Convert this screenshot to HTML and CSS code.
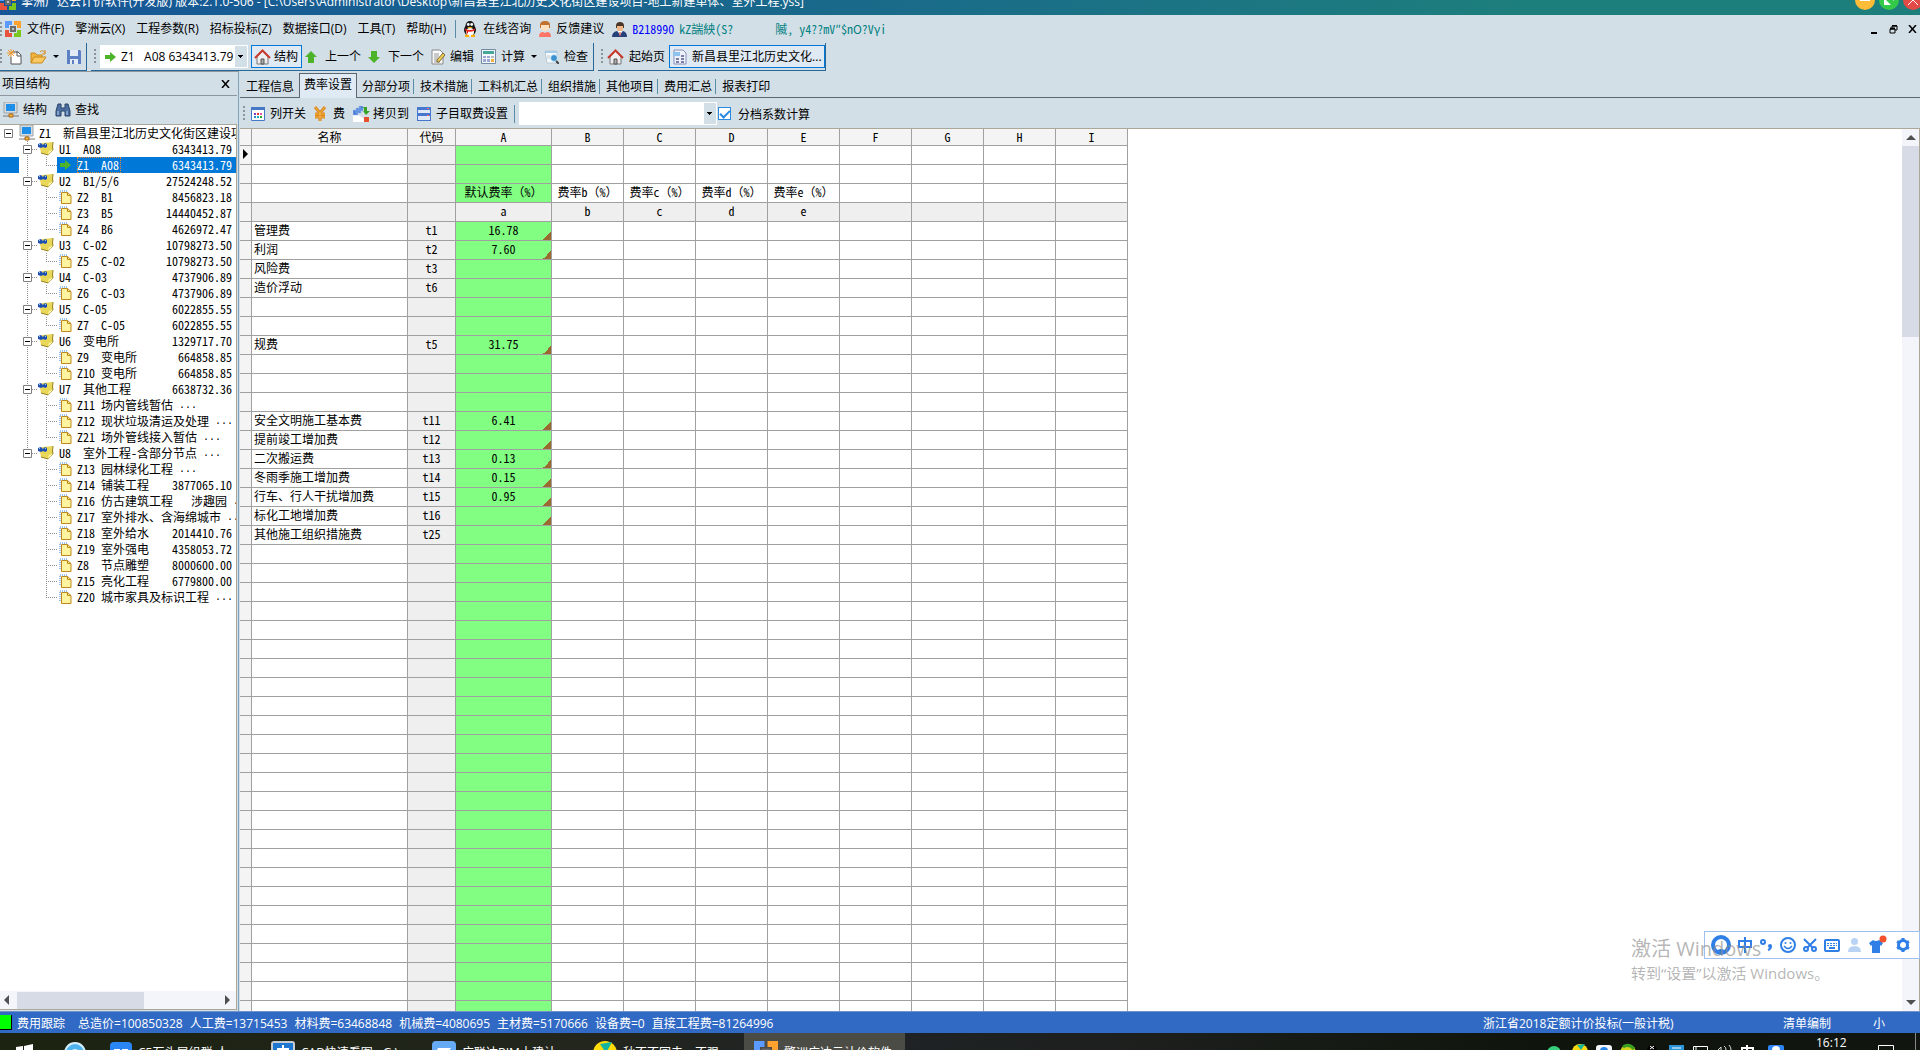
FILE: index.html
```
<!DOCTYPE html>
<html lang="zh-CN">
<head>
<meta charset="utf-8">
<title>擎洲广达云计价软件</title>
<link rel="stylesheet" href="styles.css">
</head>
<body>
<svg class="sprite" aria-hidden="true">
  <symbol id="i-logo" viewBox="0 0 16 16"><path fill="#5b9bff" d="M0 0h7v4H4v3H0z"/><path fill="#ffa12e" d="M9 0h7v7h-4V4H9z"/><path fill="#e8523c" d="M0 9h4v3h3v4H0z"/><path fill="#7ac81e" d="M12 9h4v7H9v-4h3z"/><path fill="#6a6a6a" d="M5 5h6v6H5z"/><path fill="#b9c4cc" d="M7 7h2v2H7z"/></symbol>
  <symbol id="i-qq" viewBox="0 0 16 16"><ellipse cx="8" cy="9" rx="6" ry="6" fill="#151515"/><ellipse cx="8" cy="5" rx="4.500" ry="5" fill="#151515"/><ellipse cx="8" cy="11" rx="4" ry="4" fill="#fff"/><circle cx="6.300" cy="3.500" r="1.400" fill="#fff"/><circle cx="9.700" cy="3.500" r="1.400" fill="#fff"/><path d="M5 6h6l-3 1.500z" fill="#ffb000"/><path d="M3 7.500q5 3 10 0v2q-5 2-7 1v2H4.500V10L3 9z" fill="#e8201c"/><path d="M3 14q2-1 4 0v2H3zM9 14q2-1 4 0v2H9z" fill="#ffb000"/></symbol>
  <symbol id="i-man" viewBox="0 0 12 16"><path fill="#c0702c" d="M1 4q0-4 5-4t5 4v3H1z"/><path fill="#ffe0c0" d="M2 4h8v4q-4 4-8 0z"/><path fill="#ff7466" d="M0 16q0-5 4-5l2 1 2-1q4 0 4 5z"/></symbol>
  <symbol id="i-user" viewBox="0 0 15 15"><path fill="#4a3526" d="M4 4q0-4 4-4t4 4v2H4z"/><path fill="#efb98c" d="M5 4h6v4q-3 3-6 0z"/><path fill="#27417a" d="M0 15q0-5 5-6l3 3 3-3q4 1 4 6z"/><path fill="#fff" d="M6 9h4l-2 5z"/><path fill="#d33" d="M7.500 10h1v4h-1z"/></symbol>
  <symbol id="i-new" viewBox="0 0 15 16"><path d="M5 3h6l3 3v9H4V8" fill="#fff" stroke="#555"/><path d="M10 2v5h4" fill="none" stroke="#555"/><path d="M4 0v8M0 4h8M1 1l6 6M7 1L1 7" stroke="#f0962a"/></symbol>
  <symbol id="i-open" viewBox="0 0 17 16"><path d="M1 14V4h4l2 2h5v3" fill="#f2b440" stroke="#c98a1c"/><path d="M1 14l3-6h12l-4 6z" fill="#f9c862" stroke="#c98a1c"/><path d="M10 3q3-3 5 1M15 1v4h-3" fill="none" stroke="#d58a16"/></symbol>
  <symbol id="i-save" viewBox="0 0 14 14"><path d="M0 0h13l1 1v13H0z" fill="#5d7fc4"/><path d="M3 0h8v6H3zM3 9h8v5H3z" fill="#e4ebf5"/><path d="M5 10h2v4H5z" fill="#5d7fc4"/></symbol>
  <symbol id="i-right" viewBox="0 0 11 12"><path d="M0 4h5V1l6 5-6 5V8H0z" fill="#4db32b"/></symbol>
  <symbol id="i-up" viewBox="0 0 12 14"><path d="M6 1l6 6H9v6H3V7H0z" fill="#4db32b"/></symbol>
  <symbol id="i-down" viewBox="0 0 12 14"><path d="M6 13L0 7h3V1h6v6h3z" fill="#4db32b"/></symbol>
  <symbol id="i-home" viewBox="0 0 17 16"><path d="M3 8l5.500-6L14 8v7H3z" fill="#eee" stroke="#777"/><path d="M1 9l7.500-7.500L16 9" fill="none" stroke="#c93a2c" stroke-width="2"/><path d="M7 10h3v5H7z" fill="#aaa" stroke="#555"/></symbol>
  <symbol id="i-edit" viewBox="0 0 14 16"><path d="M1 1h8l3 3v11H1z" fill="#fafafa" stroke="#888"/><path d="M3 5h5M3 7h5M3 9h4M3 11h4M3 13h6" stroke="#999"/><path d="M6 11l6-7 2 2-6 7-2 0z" fill="#f1cc55" stroke="#7a6a3a"/></symbol>
  <symbol id="i-calc" viewBox="0 0 15 15"><path d="M.5.500h14v14H.5z" fill="#f4f7fa" stroke="#7389a5"/><path d="M2 2h11v3H2z" fill="#45a79a"/><path d="M2 7h3v2H2zM6 7h3v2H6zM2 10h3v3H2zM6 10h3v3H6z" fill="#9ba8d4"/><path d="M10 7h3v2h-3z" fill="#bbb"/><path d="M10 10h3v3h-3z" fill="#f3b33a"/></symbol>
  <symbol id="i-check" viewBox="0 0 15 15"><path d="M1 2h12v12H3z" fill="#f8fbfd" stroke="#b9c9d5"/><path d="M1 2h12v2H1z" fill="#a6cbe6"/><circle cx="10" cy="9" r="3.500" fill="#3d93d0" stroke="#d9eefc"/><path d="M12 12l3 3" stroke="#444" stroke-width="2"/><path d="M3 7h3M3 9h3" stroke="#b9c9d5"/></symbol>
  <symbol id="i-sheet" viewBox="0 0 14 16"><path d="M1 1h9l3 3v11H1z" fill="#edf1fb" stroke="#8a8fb5"/><path d="M0 3h7v4H0z" fill="#8fc3ee"/><path d="M3 9h3v2H3zM8 9h3v2H8zM3 12h3v2H3zM8 12h3v2H8zM8 6h3v2H8z" fill="#7c80a8"/></symbol>
  <symbol id="i-pc" viewBox="0 0 16 16"><path d="M1 0h13v11H1z" fill="#d7dbde" stroke="#9aa3a8"/><path d="M3 2h9v7H3z" fill="#1e8fe8"/><path d="M0 14h16M8 11v2" stroke="#777"/><path d="M6 12h4v3H6z" fill="#f5b33c" stroke="#a8691a"/></symbol>
  <symbol id="i-find" viewBox="0 0 16 14"><path d="M3 1h3v4h4V1h3l2 7v5h-5V8H6v5H1V8z" fill="#4c6f9f" stroke="#26436b"/><path d="M3 8v4M12 8v4" stroke="#b8d0ee"/></symbol>
  <symbol id="i-note" viewBox="0 0 16 14"><path d="M4 1l11-1q-1 6 0 8l-5 5-7-2-1-5z" fill="#e9d75a"/><path d="M15 0q-1 6 0 8l-5 5-7-2" fill="none" stroke="#93801a"/><path d="M10 13l1-4 4-1z" fill="#fff8b0"/><path d="M0 2l3-1 2 2 2-2 2 1v3L7 6 5 5 3 6 0 5z" fill="#1f50b4"/><path d="M1 2h1v1H1zM7 2h1v1H7z" fill="#a5c6fa"/></symbol>
  <symbol id="i-doc" viewBox="0 0 13 16"><path d="M1 12V2h7" fill="none" stroke="#3f86d8" stroke-dasharray="1 1"/><path d="M2.500 3.500h6l3.500 3v8H2.500z" fill="#fff3a0" stroke="#c28a1c"/><path d="M8.500 3.500v3H12" fill="none" stroke="#c28a1c"/></symbol>
  <symbol id="i-cols" viewBox="0 0 14 14"><path d="M.5.500h13v13H.5z" fill="#fff" stroke="#4678c8"/><path d="M0 0h14v3H0z" fill="#4678c8"/><path d="M3 6h2v2H3z" fill="#823cc0"/><path d="M6 6h2v2H6z" fill="#e33"/><path d="M9 6h2v2H9z" fill="#e5a"/><path d="M3 9h2v2H3z" fill="#28c"/><path d="M6 9h2v2H6z" fill="#1bb"/><path d="M9 9h2v2H9z" fill="#3a3"/></symbol>
  <symbol id="i-yen" viewBox="0 0 12 16"><path d="M1 1l5 6 5-6M1 8h10M1 11h10M6 7v8" fill="none" stroke="#d9861c" stroke-width="3"/><path d="M1 1l5 6 5-6M1 8h10M1 11h10M6 7v8" fill="none" stroke="#f7b44a"/></symbol>
  <symbol id="i-copy" viewBox="0 0 17 16"><path d="M0 6L17 16H0z" fill="#fff"/><path d="M0 4h5v5H0zM3 2h5v5H3zM6 0h4v5H6z" fill="#4a7fd6" stroke="#9dbdf0" stroke-width=".5"/><path d="M10 1h4v4h3l-4 4-3-4h1V3z" fill="#38a322"/><path d="M11 11h5v5h-5z" fill="#e8502c"/></symbol>
  <symbol id="i-rows" viewBox="0 0 14 14"><path d="M0 0h14v14H0z" fill="#4678d0"/><path d="M1 3h12v3H1zM1 9h12v4H1z" fill="#dfe9f8"/><path d="M10 1h2v1h-2zM10 8h2v1h-2z" fill="#f66"/></symbol>
  <symbol id="i-close" viewBox="0 0 9 8"><path d="M1 0l7 8M8 0L1 8" stroke="#000" stroke-width="1.500"/></symbol>
  <symbol id="i-restore" viewBox="0 0 9 9"><path d="M3 3V1h5v4H6M1 4h5v4H1z" fill="none" stroke="#000"/><path d="M3 .5h5M1 3.500h5" stroke="#000" stroke-width="2"/></symbol>
</svg>

<header class="title-bar">
  <div class="title-inner">
    <svg width="16" height="16"><use href="#i-logo"/></svg>
    <h1>擎洲广达云计价软件(开发版) 版本:2.1.0-506 - [C:\Users\Administrator\Desktop\新昌县里江北历史文化街区建设项目-地上新建单体、室外工程.yss]</h1>
    <button class="orb orb-min" aria-label="最小化"><svg width="10" height="4"><path d="M0 2h10" stroke="#fff" stroke-width="2"/></svg></button>
    <button class="orb orb-max" aria-label="还原"><svg width="12" height="12"><path d="M1 11V4l7 7zM11 1v6L5 1z" fill="#fff"/></svg></button>
    <button class="orb orb-close" aria-label="关闭"><svg width="10" height="10"><path d="M0 0l10 10M10 0L0 10" stroke="#fff"/></svg></button>
  </div>
</header>

<nav class="menu-bar">
  <i class="grip"></i>
  <svg width="16" height="16"><use href="#i-logo"/></svg>
  <div class="menus">
    <button>文件(F)</button><button>擎洲云(X)</button><button>工程参数(R)</button><button>招标投标(Z)</button><button>数据接口(D)</button><button>工具(T)</button><button>帮助(H)</button>
  </div>
  <i class="sep"></i>
  <button class="pic"><svg width="16" height="16"><use href="#i-qq"/></svg>在线咨询</button>
  <button class="pic"><svg width="12" height="16"><use href="#i-man"/></svg>反馈建议</button>
  <span class="account"><svg width="15" height="15"><use href="#i-user"/></svg><b class="acct-id">B218990:</b><span class="acct-a">kZ諯紻(S?</span><span class="acct-b">隇, y4??mV″$nО?Vγi</span></span>
  <div class="mdi">
    <button aria-label="最小化"><svg width="9" height="9"><path d="M1 8h6" stroke="#000" stroke-width="2"/></svg></button>
    <button aria-label="还原"><svg width="9" height="9"><use href="#i-restore"/></svg></button>
    <button aria-label="关闭"><svg width="9" height="8"><use href="#i-close"/></svg></button>
  </div>
</nav>

<div class="tool-bar">
  <div class="group group-file">
    <i class="grip"></i>
    <button aria-label="新建"><svg width="15" height="16"><use href="#i-new"/></svg></button>
    <button class="drop" aria-label="打开"><svg width="17" height="16"><use href="#i-open"/></svg></button>
    <button aria-label="保存"><svg width="14" height="14"><use href="#i-save"/></svg></button>
  </div>
  <div class="group group-nav">
    <i class="grip"></i>
    <label class="node-pick"><svg width="11" height="12"><use href="#i-right"/></svg><select class="combo" aria-label="当前节点"><option>Z1 &nbsp; A08 6343413.79</option></select></label>
    <button class="boxed"><svg width="17" height="16"><use href="#i-home"/></svg>结构</button>
    <button class="step"><svg width="12" height="14"><use href="#i-up"/></svg>上一个</button>
    <button class="step"><svg width="12" height="14"><use href="#i-down"/></svg>下一个</button>
    <button><svg width="14" height="16"><use href="#i-edit"/></svg>编辑</button>
    <button class="drop"><svg width="15" height="15"><use href="#i-calc"/></svg>计算</button>
    <button><svg width="15" height="15"><use href="#i-check"/></svg>检查</button>
  </div>
  <div class="group group-pages">
    <i class="grip"></i>
    <button><svg width="17" height="16"><use href="#i-home"/></svg>起始页</button>
    <button class="boxed boxed-on"><svg width="14" height="16"><use href="#i-sheet"/></svg>新昌县里江北历史文化...</button>
  </div>
</div>

<main class="workspace">
  <aside class="side">
    <div class="side-head"><h2>项目结构</h2><button aria-label="关闭"><svg width="9" height="8"><use href="#i-close"/></svg></button></div>
    <div class="side-tools">
      <button><svg width="16" height="16"><use href="#i-pc"/></svg>结构</button>
      <button><svg width="16" height="14"><use href="#i-find"/></svg>查找</button>
    </div>
    <div class="tree-box">
      <div class="tree" id="tree"></div>
      <div class="hscroll"><i class="arrow-l"></i><i class="hthumb"></i><i class="arrow-r"></i></div>
    </div>
  </aside>

  <section class="content">
    <nav class="tabs">
      <button>工程信息</button><button class="on">费率设置</button><button>分部分项</button><button>技术措施</button><button>工料机汇总</button><button>组织措施</button><button>其他项目</button><button>费用汇总</button><button>报表打印</button>
    </nav>
    <div class="sub-bar">
      <i class="grip"></i>
      <button><svg width="14" height="14"><use href="#i-cols"/></svg>列开关</button>
      <button class="loose"><svg width="12" height="16"><use href="#i-yen"/></svg>费</button>
      <button class="tight"><svg width="17" height="16"><use href="#i-copy"/></svg>拷贝到</button>
      <button><svg width="14" height="14"><use href="#i-rows"/></svg>子目取费设置</button>
      <i class="sep"></i>
      <select class="combo rate-pick" aria-label="费率"><option></option></select>
      <label class="tick"><input type="checkbox" checked>分档系数计算</label>
    </div>
    <div class="grid-area">
      <div class="grid-view">
        <table class="grid">
          <colgroup><col class="c-mark"><col class="c-name"><col class="c-code"><col class="c-a"><col><col><col><col><col><col><col><col></colgroup>
          <thead><tr><th></th><th>名称</th><th>代码</th><th>A</th><th>B</th><th>C</th><th>D</th><th>E</th><th>F</th><th>G</th><th>H</th><th>I</th></tr></thead>
          <tbody id="rates"></tbody>
        </table>
      </div>
      <div class="vscroll"><i class="arrow-u"></i><i class="vthumb"></i><i class="arrow-d"></i></div>
    </div>
  </section>
</main>

<footer class="status">
  <i class="lamp"></i><span class="track">费用跟踪</span>
  <div class="totals"><span>总造价=100850328</span><span>人工费=13715453</span><span>材料费=63468848</span><span>机械费=4080695</span><span>主材费=5170666</span><span>设备费=0</span><span>直接工程费=81264996</span></div>
  <span class="st-quota">浙江省2018定额计价投标(一般计税)</span><span class="st-mode">清单编制</span><span class="st-size">小</span>
</footer>

<footer class="task-bar">
  <button class="start" aria-label="开始"><svg width="18" height="18"><path d="M0 3l7-1v7H0zM8 2l9-2v9H8zM0 10h7v7l-7-1zM8 10h9v9l-9-2z" fill="#fff"/></svg></button>
  <button class="qbrowse" aria-label="浏览器"><svg width="22" height="22"><circle cx="11" cy="11" r="10" fill="#4fb4ee" stroke="#d8f0ff" stroke-width="2"/><circle cx="11" cy="12" r="5" fill="#d8f0ff"/></svg></button>
  <button class="task"><svg width="22" height="22"><rect width="22" height="22" rx="4" fill="#2b86f5"/><path d="M4 7h6v8H4zM12 7h6v8h-6z" fill="#fff"/></svg>C5石头屋组群-人</button>
  <button class="task"><svg width="24" height="24"><rect width="24" height="24" rx="3" fill="#c5ccd2"/><path d="M2 2h20v18H2z" fill="#1e78d2"/><path d="M12 4v10M6 8h12" stroke="#fff" stroke-width="2"/></svg>CAD快速看图 - G:\</button>
  <button class="task"><svg width="24" height="24"><rect width="24" height="24" rx="4" fill="#66a9f5"/><path d="M6 7h13l-3 4H4z" fill="#fff"/></svg>广联达BIM土建计</button>
  <button class="task"><svg width="24" height="24"><circle cx="12" cy="12" r="12" fill="#ffdb0a"/><path d="M7 3l12-2-6 11z" fill="#13b5a0"/></svg>秋不不回去，不强</button>
  <button class="task task-on"><svg width="24" height="24"><use href="#i-logo"/></svg>擎洲广达云计价软件</button>
  <div class="tray">
    <svg width="250" height="17">
      <circle cx="11" cy="20" r="7" fill="#36d07c"/><circle cx="37" cy="19" r="8" fill="#ffd90a"/><path d="M34 12l8-1-4 6z" fill="#14b59e"/><rect x="53" y="12" width="16" height="10" rx="3" fill="#f3f7fb"/><circle cx="61" cy="18" r="4" fill="#2a86e8"/><circle cx="85" cy="20" r="8" fill="#d5d419"/><path d="M80 14q6-4 11 2" stroke="#3a9f22" stroke-width="3" fill="none"/><circle cx="109" cy="17" r="5" fill="#000"/><path d="M107 13l4 3M111 13l-4 3" stroke="#fff"/><path d="M126 12h15v6h-15z" fill="#2b94d8"/><path d="M129 15h9" stroke="#fff"/><path d="M150.500 20v-6.500h14V20M153 13v5" fill="none" stroke="#fff"/><path d="M175 17l3-3v4M181 13q2 1 2 4M186 12q2 2 2 5" fill="none" stroke="#ddd"/><path d="M199 18v-3h11v3M204 12v6" fill="none" stroke="#fff" stroke-width="2"/><rect x="225" y="12" width="16" height="9" rx="2" fill="#2c85f4"/><circle cx="233" cy="17" r="4" fill="#fff"/>
    </svg>
    <time>16:12</time>
    <svg class="bell" width="17" height="17"><path d="M.5 17v-4.500h15V17" fill="none" stroke="#fff"/></svg>
    <i class="peek"></i>
  </div>
</footer>

<div class="ime">
  <svg width="20" height="20"><circle cx="10" cy="10" r="8" fill="none" stroke="#2f7fe6" stroke-width="4"/><path d="M5 18a5 4 0 0 1 10 0z" fill="#2f7fe6"/></svg>
  <svg width="14" height="16"><path d="M1 4h12v6H1zM7 0v16" fill="none" stroke="#2f7fe6" stroke-width="2"/></svg>
  <svg width="13" height="14"><circle cx="3" cy="4" r="2" fill="none" stroke="#2f7fe6" stroke-width="2"/><path d="M8 12q3-1 3-4" fill="none" stroke="#2f7fe6" stroke-width="2"/><circle cx="10" cy="8" r="2" fill="#2f7fe6"/></svg>
  <svg width="16" height="16"><circle cx="8" cy="8" r="7" fill="none" stroke="#2f7fe6" stroke-width="2"/><path d="M4 9q4 5 8 0" fill="none" stroke="#2f7fe6" stroke-width="1.500"/><circle cx="5.500" cy="6" r="1" fill="#2f7fe6"/><circle cx="10.500" cy="6" r="1" fill="#2f7fe6"/></svg>
  <svg width="14" height="14"><path d="M1 1l9 9M13 1l-9 9" stroke="#2f7fe6" stroke-width="2"/><circle cx="3" cy="11" r="2" fill="none" stroke="#2f7fe6" stroke-width="2"/><circle cx="11" cy="11" r="2" fill="none" stroke="#2f7fe6" stroke-width="2"/></svg>
  <svg width="16" height="13"><rect x="1" y="1" width="14" height="11" rx="1" fill="none" stroke="#2f7fe6" stroke-width="2"/><path d="M3 4.500h10M3 6.500h10" stroke="#2f7fe6" stroke-dasharray="2 1"/><path d="M5 9h6" stroke="#2f7fe6" stroke-width="2"/></svg>
  <svg width="13" height="14"><circle cx="6.500" cy="3.500" r="3.500" fill="#b9d3f5"/><path d="M0 14q0-6 6.500-6t6.500 6z" fill="#b9d3f5"/></svg>
  <svg width="20" height="20"><path d="M1 8l4-3q3 2 6 0l4 3-2 3-1-1v8H4v-8l-1 1z" fill="#2f7fe6"/><circle cx="15" cy="4" r="3.500" fill="#f4502c"/></svg>
  <svg width="16" height="16"><circle cx="8" cy="8" r="4.500" fill="none" stroke="#2f7fe6" stroke-width="3"/><path d="M8 1v2M8 13v2M2 4.500l2 1M12 10.500l2 1M2 11.500l2-1M12 5.500l2-1" stroke="#2f7fe6" stroke-width="3"/></svg>
</div>
<div class="activate"><p class="act-big">激活 Windows</p><p class="act-small">转到“设置”以激活 Windows。</p></div>
<script src="app.js"></script>
</body>
</html>
```
FILE: app.js
```
const units = [
  ["U1", "A08", "6343413.79", [["Z1", "A08", "6343413.79"]]],
  ["U2", "B1/5/6", "27524248.52", [["Z2", "B1", "8456823.18"], ["Z3", "B5", "14440452.87"], ["Z4", "B6", "4626972.47"]]],
  ["U3", "C-02", "10798273.50", [["Z5", "C-02", "10798273.50"]]],
  ["U4", "C-03", "4737906.89", [["Z6", "C-03", "4737906.89"]]],
  ["U5", "C-05", "6022855.55", [["Z7", "C-05", "6022855.55"]]],
  ["U6", "变电所", "1329717.70", [["Z9", "变电所", "664858.85"], ["Z10", "变电所", "664858.85"]]],
  ["U7", "其他工程", "6638732.36", [["Z11", "场内管线暂估 ···", ""], ["Z12", "现状垃圾清运及处理 ···", ""], ["Z21", "场外管线接入暂估 ···", ""]]],
  ["U8", "室外工程-含部分节点 ···", "", [["Z13", "园林绿化工程 ···", ""], ["Z14", "铺装工程", "3877065.10"], ["Z16", "仿古建筑工程\u3000 涉趣园 ···", ""], ["Z17", "室外排水、含海绵城市 ···", ""], ["Z18", "室外给水", "2014410.76"], ["Z19", "室外强电", "4358053.72"], ["Z8", "节点雕塑", "8000600.00"], ["Z15", "亮化工程", "6779800.00"], ["Z20", "城市家具及标识工程 ···", ""]]]
];

const box = '<svg class="fold" width="9" height="9"><path d="M.5.5h8v8h-8z" fill="#fff" stroke="#808080"/><path d="M2 4.5h5" stroke="#000"/></svg>';
const icon = (id, w, h) => `<svg class="ico" width="${w}" height="${h}"><use href="#${id}"/></svg>`;
const cells = ([code, name, sum]) =>
  `<span class="pair"><span class="code">${code}</span><span class="name">${name.replace("···", '<span class="more">···</span>')}</span></span><span class="sum">${sum}</span>`;

document.getElementById("tree").innerHTML =
  `<div class="row root">${box}${icon("i-pc", 16, 16)}<span class="pair"><span class="code">Z1</span><span class="name">新昌县里江北历史文化街区建设项目</span></span></div><ul>` +
  units.map(u =>
    `<li class="unit"><div class="row">${box}${icon("i-note", 16, 14)}${cells(u)}</div><ul>` +
    u[3].map(z => {
      const picked = z[0] === "Z1";
      return `<li class="item"><div class="row${picked ? " picked" : ""}">${picked ? icon("i-right", 13, 12) : icon("i-doc", 13, 16)}${cells(z)}</div></li>`;
    }).join("") + "</ul></li>"
  ).join("") + "</ul>";

const ROWS = 46;
const rates = {
  4: ["管理费", "t1", "16.78", 1], 5: ["利润", "t2", "7.60", 1], 6: ["风险费", "t3", "", 0], 7: ["造价浮动", "t6", "", 0],
  10: ["规费", "t5", "31.75", 1],
  14: ["安全文明施工基本费", "t11", "6.41", 1], 15: ["提前竣工增加费", "t12", "", 1], 16: ["二次搬运费", "t13", "0.13", 1],
  17: ["冬雨季施工增加费", "t14", "0.15", 1], 18: ["行车、行人干扰增加费", "t15", "0.95", 1],
  19: ["标化工地增加费", "t16", "", 1], 20: ["其他施工组织措施费", "t25", "", 0]
};
const heads = ["默认费率（%）", "费率b（%）", "费率c（%）", "费率d（%）", "费率e（%）"];
let html = "";
for (let r = 0; r < ROWS; r++) {
  const [name, code, rate, note] = rates[r] || ["", "", "", 0];
  const extra = i => r === 2 ? heads[i] || "" : r === 3 ? "abcde"[i] || "" : "";
  html += `<tr${r === 3 ? ' class="letters"' : ""}><th>${r === 0 ? '<i class="cursor"></i>' : ""}</th><td class="t-name">${name}</td><td class="t-code">${code}</td>` +
    `<td class="t-a${note ? " noted" : ""}">${rate || extra(0)}</td>`;
  for (let c = 1; c < 9; c++) html += `<td>${extra(c)}</td>`;
  html += "</tr>";
}
document.getElementById("rates").innerHTML = html;
```
FILE: styles.css
```
* { box-sizing: border-box; }
:root {
  --bar: #d3dfe7;
  --ui: "Open Sans", "Noto Sans CJK SC", sans-serif;
  --song: "Noto Sans Mono CJK SC", "Noto Sans CJK SC", monospace;
  --line: #a0a0a0;
  --tan: #aca899;
}
body { margin: 0; height: 100vh; display: flex; flex-direction: column; overflow: hidden; background: var(--bar); font: 12px/16px var(--ui); color: #000; position: relative; }
h1, h2, p, ul { margin: 0; padding: 0; font-size: 12px; font-weight: 400; list-style: none; }
svg { display: block; flex: none; }
.sprite { position: absolute; width: 0; height: 0; }
button { margin: 0; padding: 0; border: 0; background: none; font: inherit; color: inherit; display: flex; align-items: center; gap: 5px; white-space: nowrap; flex: none; }
select { font: inherit; color: inherit; }
i { flex: none; }
.grip { width: 2px; height: 15px; background: repeating-linear-gradient(#8c9399 0 2px, transparent 2px 4px); }
.sep { width: 1px; height: 18px; background: #5a8ca8; }

.title-bar { flex: none; height: 15px; overflow: hidden; background: linear-gradient(90deg, #165697, #19698b 43%, #1d7f7c 80%); color: #fff; }
.title-inner { height: 30px; margin-top: -13px; display: flex; align-items: center; gap: 5px; }
.title-inner h1 { flex: 1; white-space: nowrap; }
.orb { width: 20px; height: 20px; border-radius: 10px; justify-content: center; margin: -4px -1px 0 0; }
.orb-min { background: #ffbc38; }
.orb-max { background: #35c94a; }
.orb-close { background: #e24a45; margin-right: -3px; }

.menu-bar { flex: none; height: 28px; display: flex; align-items: center; padding-right: 3px; }
.menu-bar > svg { margin: 0 6px 0 3px; }
.menus { display: flex; gap: 11px; margin-right: 9px; }
.menu-bar .sep { margin-right: 6px; }
.pic { margin-right: 8px; }
.account { display: flex; align-items: center; font-family: var(--song); color: #008080; white-space: pre; }
.acct-id { color: #00f; font-weight: 400; width: 44px; margin: 0 3px 0 5px; overflow: hidden; }
.acct-a { width: 96px; }
.mdi { display: flex; gap: 10px; margin-left: auto; }

.tool-bar { flex: none; height: 28px; display: flex; gap: 4px; }
.group { display: flex; align-items: center; border: 0 solid #286898; border-width: 0 1px 1px 0; height: 28px; }
.group-file { width: 87px; gap: 8px; }
.group-file .grip, .group-nav .grip { margin-right: -3px; }
.group-nav { gap: 7px; padding: 0 5px 0 3px; }
.group-pages { gap: 4px; padding-left: 3px; }
.drop::after { content: ""; border: 3px solid transparent; border-top-color: #000; border-bottom: 0; margin-left: 1px; }
.step { gap: 8px; }
.boxed { height: 23px; padding: 0 3px 0 2px; gap: 3px; border: 1px solid #0078d7; background: #e0eaf5; margin: 0 -4px; }
.boxed-on { margin: 0; padding: 0 2px 0 3px; gap: 5px; }
.combo { appearance: none; border: 1px solid #fff; border-radius: 0; outline: 0; height: 23px; padding: 0 13px 0 0; margin: 0;
  background: linear-gradient(#000, #000) right 4px top 9px / 5px 1px no-repeat, linear-gradient(#000, #000) right 5px top 10px / 3px 1px no-repeat, linear-gradient(#000, #000) right 6px top 11px / 1px 1px no-repeat, linear-gradient(var(--bar), var(--bar)) right / 12px 100% no-repeat, #fff; }
.node-pick { display: flex; align-items: center; width: 148px; background: #fff; padding-left: 5px; gap: 4px; }
.node-pick .combo { flex: 1; min-width: 0; }

.workspace { flex: 1; min-height: 0; display: flex; border-bottom: 1px solid #6f93c8; }
.side { flex: none; width: 239px; display: flex; flex-direction: column; border-right: 1px solid #7fa3ba; border-top: 1px solid #8d979e; padding-right: 1px; margin-right: 1px; }
.side-head { flex: none; height: 24px; display: flex; align-items: center; justify-content: space-between; padding: 0 7px 0 2px; border-bottom: 1px solid #8d979e; }
.side-tools { flex: none; height: 28px; display: flex; align-items: center; gap: 8px; padding-left: 3px; }
.side-tools button { gap: 4px; }
.tree-box { flex: 1; min-height: 0; display: flex; flex-direction: column; background: #fff; border: solid var(--tan); border-width: 1px 1px 1px 0; margin-bottom: 1px; }
.tree { flex: 1; min-height: 0; overflow: hidden; font-family: var(--song); }
.row { display: flex; align-items: center; height: 16px; white-space: pre; padding-right: 4px; }
.row .ico { margin-right: 4px; }
.code { display: inline-block; width: 24px; }
.pair { flex: none; }
.more { font: 10px/12px "Liberation Mono", monospace; }
.sum { margin-left: auto; }
.root { padding-left: 4px; }
.root .fold { margin-right: 6px; }
.unit, .item, .unit > .row { --dot: repeating-linear-gradient(90deg, #909090 0 1px, transparent 1px 2px); --dotv: repeating-linear-gradient(#909090 0 1px, transparent 1px 2px); }
.unit { background: var(--dotv) 27px 0 / 1px 100% no-repeat; }
.unit:last-child { background-size: 1px 8px; }
.unit > .row { padding-left: 23px; background: var(--dot) 32px 8px / 6px 1px no-repeat; }
.unit > .row .fold { margin-right: 6px; }
.unit > .row .ico { margin-right: 5px; }
.item { background: var(--dotv) 46px 0 / 1px 100% no-repeat, var(--dot) 46px 8px / 12px 1px no-repeat; }
.item:last-child { background-size: 1px 8px, 12px 1px; }
.item .row { padding-left: 59px; }
.item .row .ico { margin-right: 5px; }
.picked { color: #fff; background: linear-gradient(#0078d7, #0078d7) 0 0 / 19px 100% no-repeat, linear-gradient(#0078d7, #0078d7) 57px 0 / 100% 100% no-repeat; }
.picked .pair { outline: 1px dotted #e08a3c; outline-offset: -1px; padding-right: 2px; }
.hscroll { flex: none; height: 18px; display: flex; align-items: center; background: #f3f5fa; padding: 0 6px 0 4px; }
.hthumb { width: 127px; height: 17px; background: #d6dbe5; margin-left: 8px; }
.arrow-l, .arrow-r, .arrow-u, .arrow-d { border: 5px solid transparent; }
.arrow-l { border-right-color: #505050; border-left: 0; }
.arrow-r { border-left-color: #505050; border-right: 0; margin-left: auto; }
.arrow-u { border-bottom-color: #505050; border-top: 0; }
.arrow-d { border-top-color: #505050; border-bottom: 0; margin-top: auto; }

.content { flex: 1; min-width: 0; display: flex; flex-direction: column; }
.tabs { flex: none; height: 27px; display: flex; align-items: flex-end; border-bottom: 1px solid #5c666c; }
.tabs button { height: 15px; margin-bottom: 3px; padding: 0 3px 0 6px; }
.tabs button:nth-child(n+3):not(:last-child) { border-right: 1px solid #5a8ca8; }
.tabs .on { height: 25px; padding: 0 4px 2px; margin: 0 -1px -1px 2px; border: 1px solid #5c666c; border-bottom: 0; background: #dfeaf5; }
.sub-bar { flex: none; height: 31px; display: flex; align-items: center; gap: 8px; padding: 1px 0 0 3px; border-bottom: 1px solid var(--tan); }
.sub-bar .grip { margin-right: -2px; }
.sub-bar .tight { gap: 3px; }
.sub-bar .loose { gap: 7px; }
.sub-bar .sep { margin: 0 -4px 0 -2px; }
.rate-pick { width: 198px; }
.tick { display: flex; align-items: center; gap: 7px; margin-left: -7px; font-family: var(--song); }
.tick input { appearance: none; width: 13px; height: 13px; margin: 0; border: 1px solid #2b88e0; background: #fff; display: grid; place-items: center; }
.tick input:checked::before { content: ""; width: 8px; height: 4px; border: solid #2b88e0; border-width: 0 0 2px 2px; transform: rotate(-45deg); margin-bottom: 2px; }

.grid-area { flex: 1; min-height: 0; display: flex; background: #fff; border-right: 1px solid var(--tan); }
.grid-view { flex: 1; min-width: 0; overflow: hidden; }
.grid { table-layout: fixed; width: 888px; border-collapse: separate; border-spacing: 0; font: 12px/16px var(--song); }
.grid col { width: 72px; }
.grid .c-mark { width: 12px; }
.grid .c-name { width: 156px; }
.grid .c-code { width: 48px; }
.grid .c-a { width: 96px; }
.grid th, .grid td { padding: 0 0 2px; height: 19px; border: solid var(--line); border-width: 0 1px 1px 0; text-align: center; font-weight: 400; white-space: nowrap; overflow: hidden; }
.grid th { background: #f4f4f4; }
.grid thead th { height: 17px; padding: 0; }
.grid .t-name { text-align: left; padding-left: 2px; }
.grid .t-code { background: #efefef; }
.grid .t-a { background: #82ff82; }
.grid .letters td { background: #efefef; }
.grid .noted { background: linear-gradient(135deg, transparent 50%, #9a6a30 50%) right bottom / 8px 8px no-repeat, #82ff82; }
.cursor { display: block; margin-left: 3px; border: 5px solid transparent; border-left-color: #000; border-right: 0; width: 0; }
.vscroll { flex: none; width: 17px; display: flex; flex-direction: column; align-items: center; background: #f3f5fa; padding: 6px 0 6px; }
.vthumb { width: 17px; flex: 0 0 191px; background: #d6dbe5; margin-top: 6px; }

.status { flex: none; height: 21px; display: flex; align-items: center; padding-top: 3px; background: #316ac5; color: #fff; white-space: nowrap; }
.lamp { width: 12px; height: 15px; margin-top: -3px; background: #0f0; border: solid #000; border-width: 0 1px 1px 0; }
.track { margin: 0 13px 0 5px; }
.totals { display: flex; gap: 7px; }
.st-quota { margin-left: auto; width: 300px; }
.st-mode { width: 90px; }
.st-size { width: 47px; }

.task-bar { flex: none; height: 17px; overflow: hidden; display: flex; align-items: flex-start; background: linear-gradient(90deg, #1c2310, #22261d 30%, #202326 45%, #1c1f1c 60%, #0f150c 80%, #101510); color: #fff; }
.task-bar button { height: 40px; }
.start { width: 62px; padding-left: 16px; }
.qbrowse { width: 44px; padding-left: 2px; }
.task { width: 161px; padding-left: 4px; gap: 6px; overflow: hidden; }
.task-on { background: #4b4c46; padding-left: 10px; margin-left: -6px; }
.tray { margin-left: auto; display: flex; align-items: flex-start; }
.tray time { margin: 1px 31px 0 23px; line-height: 18px; width: 31px; }
.bell { margin-right: 20px; }
.peek { width: 1px; height: 17px; background: #888; margin-right: 4px; }

.ime { position: absolute; right: 0; bottom: 91px; height: 28px; width: 216px; display: flex; align-items: center; justify-content: space-between; padding: 0 8px 0 6px; background: #fff; border: 1px solid #9fc0ee; }
.activate { position: absolute; right: 85px; bottom: 67px; width: 204px; color: rgba(140, 140, 140, .65); white-space: nowrap; }
.act-big { font-size: 20px; line-height: 28px; }
.act-small { font-size: 15px; line-height: 20px; }
```
